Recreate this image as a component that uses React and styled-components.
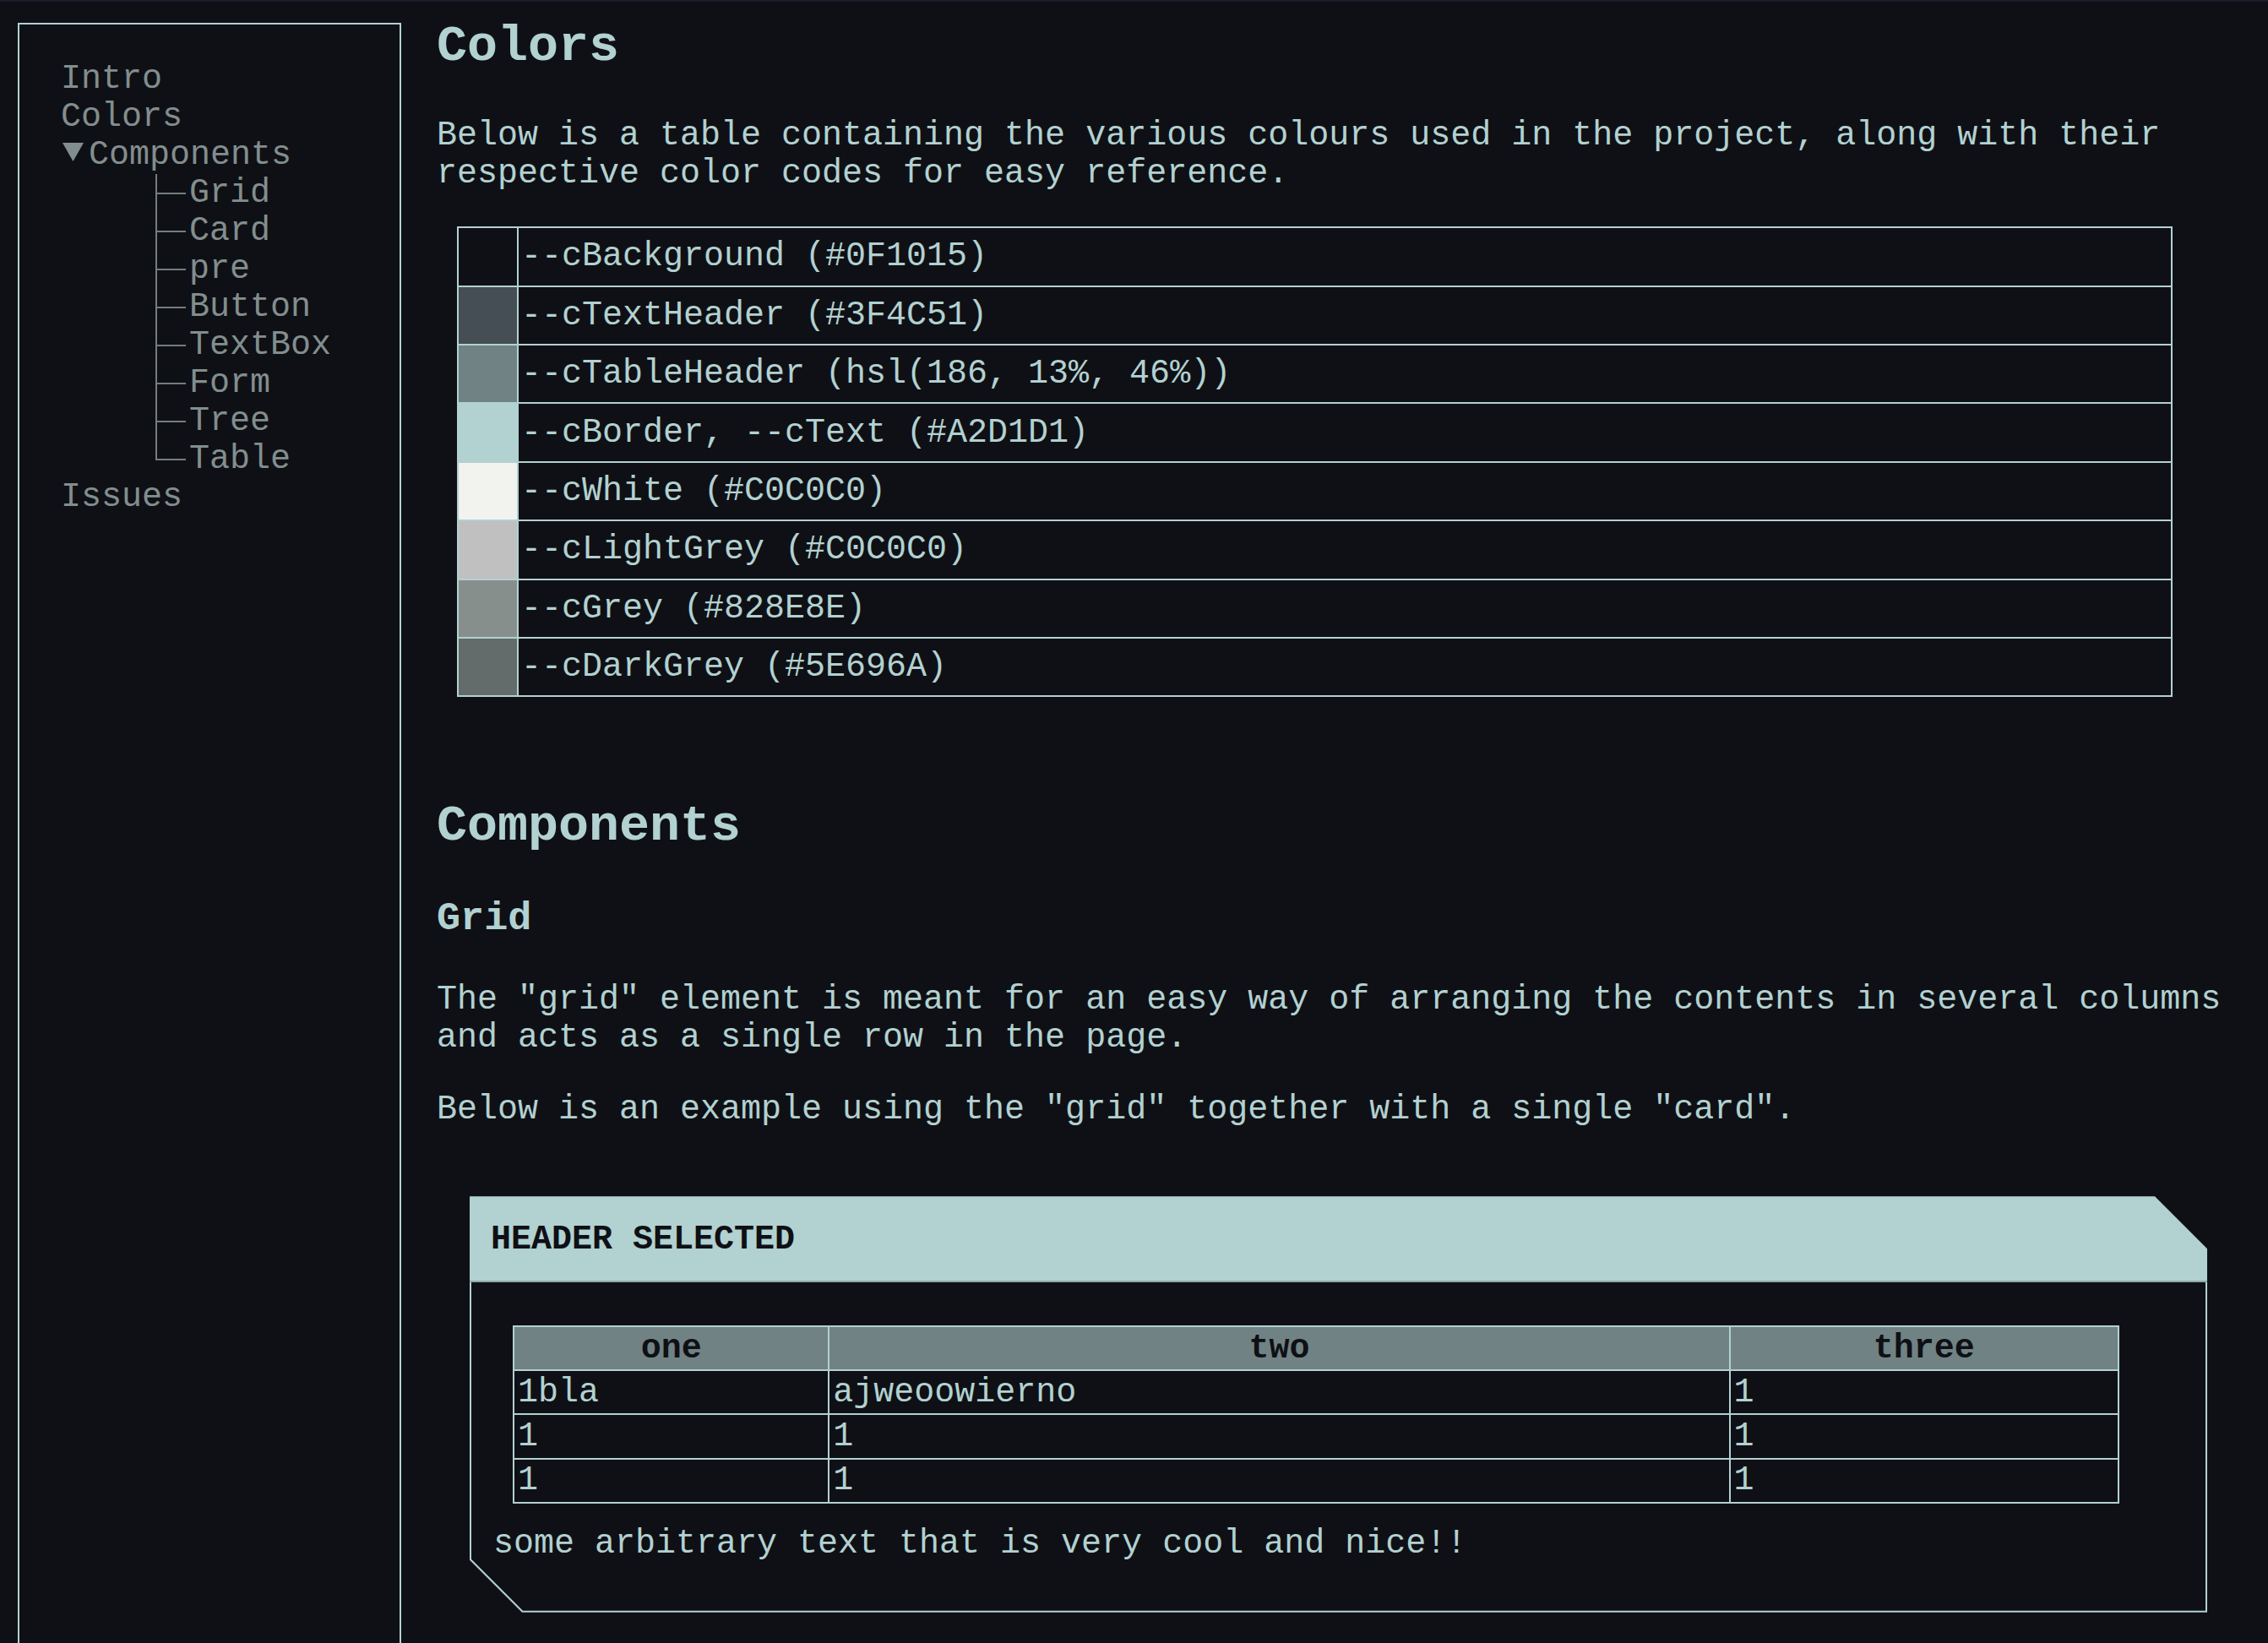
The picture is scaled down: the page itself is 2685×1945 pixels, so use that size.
import React from 'react';
import styled, { createGlobalStyle } from 'styled-components';

const BG = '#0F1015';
const TEXT = '#B2D1D1';
const GREY = '#828E8E';
const LINE = '#737D7D';
const TH = '#708284';

const Global = createGlobalStyle`
  *, *::before, *::after { box-sizing: border-box; }
  html, body { margin: 0; padding: 0; height: 100%; overflow: hidden; background: ${BG}; }
  body {
    border-top: 2px solid #1D1C2B;
    font-family: "Liberation Mono", "Courier New", monospace;
    font-size: 40px;
    line-height: normal;
    color: ${TEXT};
  }
  #root { height: 100%; }
`;

const Page = styled.div`
  display: flex;
  align-items: flex-start;
  gap: 42px;
  padding: 0 30px 0 21px;
`;

const Sidebar = styled.nav`
  flex: 0 0 454px;
  height: 100vh;
  margin-top: 25px;
  border: 2px solid ${TEXT};
  padding: 42px 0 0 49px;
  color: ${GREY};
`;

const NavList = styled.ul`
  list-style: none;
  margin: 0;
  padding: 0;
`;

const NavItem = styled.li`
  margin: 0;
  padding: 0;
`;

const Summary = styled.div`
  display: flex;
  align-items: flex-start;
`;

const Caret = styled.svg`
  flex: 0 0 33px;
  width: 33px;
  height: 45px;
  display: block;
`;

const ChildList = styled.ul`
  list-style: none;
  margin: 0 0 0 112px;
  padding: 0;
`;

const ChildItem = styled.li`
  position: relative;
  padding-left: 40px;
  &::before {
    content: '';
    position: absolute;
    left: 0;
    top: 0;
    height: ${(p) => (p.$last ? 'calc(50% + 1px)' : '100%')};
    border-left: 2px solid ${LINE};
  }
  &::after {
    content: '';
    position: absolute;
    left: 0;
    top: calc(50% - 1px);
    width: 36px;
    border-top: 2px solid ${LINE};
  }
`;

const Main = styled.main`
  flex: 1;
  min-width: 0;
  padding-top: 18.5px;
`;

const Section = styled.section`
  padding-top: ${(p) => p.$pad || 0}px;
`;

const H2 = styled.h2`
  font-size: 1.5em;
  font-weight: bold;
  line-height: normal;
  margin: ${(p) => (p.$first ? '0' : '0.83em')} 0 0.83em;
`;

const H3 = styled.h3`
  font-size: 1.17em;
  font-weight: bold;
  line-height: normal;
  margin: 1em 0;
`;

const P = styled.p`
  margin: 1em 0;
  line-height: normal;
`;

const ColorTable = styled.table`
  width: 95%;
  margin: 0 0 0 24px;
  border-collapse: collapse;
  table-layout: fixed;
`;

const SwatchCell = styled.td`
  width: 71px;
  padding: 0;
  border: 2px solid ${TEXT};
  background: ${(p) => p.$c};
`;

const LabelCell = styled.td`
  padding: 11.2px 3px;
  border: 2px solid ${TEXT};
  white-space: nowrap;
`;

const GridRow = styled.div`
  padding: 40px 42px 40px 39px;
`;

const Card = styled.div`
  display: flex;
  flex-direction: column;
`;

const CardHeader = styled.div`
  background: ${TEXT};
  color: ${BG};
  font-weight: bold;
  padding: 29px 25px 25.7px;
  border-bottom: 2px solid #8DA8A8;
  clip-path: polygon(0 0, calc(100% - 62px) 0, 100% 62px, 100% 100%, 0 100%);
`;

const CardFrame = styled.div`
  background: ${TEXT};
  padding: 0 2px 2px;
  clip-path: polygon(0 0, 100% 0, 100% 100%, 62px 100%, 0 calc(100% - 62px));
`;

const CardBody = styled.div`
  background: ${BG};
  padding: 51px 25px 57px 26px;
  clip-path: polygon(0 0, 100% 0, 100% 100%, 61px 100%, 0 calc(100% - 61px));
`;

const DataTable = styled.table`
  width: 95%;
  margin: 0 0 25px 23px;
  border-collapse: collapse;
  table-layout: fixed;
`;

const Th = styled.th`
  width: ${(p) => p.$w};
  background: ${TH};
  color: ${BG};
  font-weight: bold;
  text-align: center;
  padding: 2.6px 4px;
  border: 2px solid ${TEXT};
`;

const Td = styled.td`
  padding: 2.6px 4px;
  border: 2px solid ${TEXT};
  text-align: left;
`;

const CardText = styled.div`
  line-height: normal;
`;

const colors = [
  ['#0F1015', '--cBackground (#0F1015)'],
  ['#454E55', '--cTextHeader (#3F4C51)'],
  ['#708284', '--cTableHeader (hsl(186, 13%, 46%))'],
  ['#B2D1D1', '--cBorder, --cText (#A2D1D1)'],
  ['#F2F2EE', '--cWhite (#C0C0C0)'],
  ['#C0C0C0', '--cLightGrey (#C0C0C0)'],
  ['#878F8D', '--cGrey (#828E8E)'],
  ['#636B6B', '--cDarkGrey (#5E696A)'],
];

const children = ['Grid', 'Card', 'pre', 'Button', 'TextBox', 'Form', 'Tree', 'Table'];

const rows = [
  ['1bla', 'ajweoowierno', '1'],
  ['1', '1', '1'],
  ['1', '1', '1'],
];

export default function App() {
  return (
    <>
      <Global />
      <Page>
        <Sidebar>
          <NavList>
            <NavItem>Intro</NavItem>
            <NavItem>Colors</NavItem>
            <NavItem>
              <Summary>
                <Caret viewBox="0 0 33 45">
                  <polygon points="2,8 27,8 14.5,30" fill={GREY} />
                </Caret>
                <span>Components</span>
              </Summary>
              <ChildList>
                {children.map((c, i) => (
                  <ChildItem key={c} $last={i === children.length - 1}>
                    {c}
                  </ChildItem>
                ))}
              </ChildList>
            </NavItem>
            <NavItem>Issues</NavItem>
          </NavList>
        </Sidebar>
        <Main>
          <Section>
            <H2 $first>Colors</H2>
            <P>
              Below is a table containing the various colours used in the project, along with their
              respective color codes for easy reference.
            </P>
            <ColorTable>
              <tbody>
                {colors.map(([c, label]) => (
                  <tr key={label}>
                    <SwatchCell $c={c} />
                    <LabelCell>{label}</LabelCell>
                  </tr>
                ))}
              </tbody>
            </ColorTable>
          </Section>
          <Section $pad={68.6}>
            <H2>Components</H2>
            <H3>Grid</H3>
            <P>
              The "grid" element is meant for an easy way of arranging the contents in several columns
              and acts as a single row in the page.
            </P>
            <P>Below is an example using the "grid" together with a single "card".</P>
            <GridRow>
              <Card>
                <CardHeader>HEADER SELECTED</CardHeader>
                <CardFrame>
                  <CardBody>
                    <DataTable>
                      <thead>
                        <tr>
                          <Th $w="19.65%">one</Th>
                          <Th $w="56.12%">two</Th>
                          <Th $w="24.23%">three</Th>
                        </tr>
                      </thead>
                      <tbody>
                        {rows.map((r, i) => (
                          <tr key={i}>
                            {r.map((v, j) => (
                              <Td key={j}>{v}</Td>
                            ))}
                          </tr>
                        ))}
                      </tbody>
                    </DataTable>
                    <CardText>some arbitrary text that is very cool and nice!!</CardText>
                  </CardBody>
                </CardFrame>
              </Card>
            </GridRow>
          </Section>
        </Main>
      </Page>
    </>
  );
}
